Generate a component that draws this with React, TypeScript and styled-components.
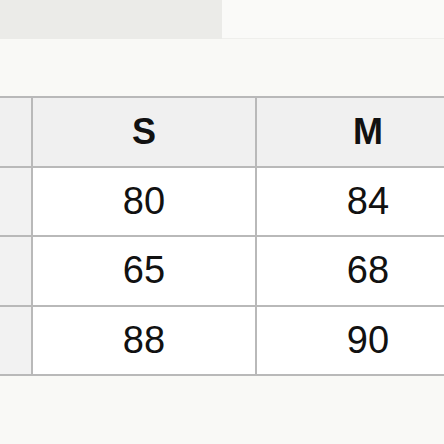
import styled, { createGlobalStyle } from 'styled-components'

const GlobalStyle = createGlobalStyle`
	html, body {
		margin: 0;
		padding: 0;
		background-color: #f9f9f6;
		overflow: hidden;
	}
	body {
		font-family: 'Liberation Sans', Arial, sans-serif;
		color: #111;
	}
`

const rows = [
	{ label: '', s: '80', m: '84' },
	{ label: '', s: '65', m: '68' },
	{ label: '', s: '88', m: '90' },
]

function App() {
	return (
		<>
			<GlobalStyle />
			<Page>
				<TopBar>
					<div className="tab" />
					<div className="rest" />
				</TopBar>
				<TableWrap>
					<SizeTable>
						<thead>
							<tr>
								<HeadCell $stub />
								<HeadCell>S</HeadCell>
								<HeadCell>M</HeadCell>
							</tr>
						</thead>
						<tbody>
							{rows.map((row, i) => (
								<tr key={i}>
									<StubCell>{row.label}</StubCell>
									<Cell>{row.s}</Cell>
									<Cell>{row.m}</Cell>
								</tr>
							))}
						</tbody>
					</SizeTable>
				</TableWrap>
			</Page>
		</>
	)
}

export default App

const Page = styled.div`
	width: 444px;
	height: 444px;
	display: flex;
	flex-direction: column;
	overflow: hidden;
`

const TopBar = styled.div`
	display: flex;
	height: 39px;

	.tab {
		width: 222px;
		background-color: #ebebe8;
	}

	.rest {
		flex: 1;
		height: 38px;
		background-color: #fafaf8;
		border-bottom: 1px solid #efefec;
	}
`

const TableWrap = styled.div`
	margin-top: 57px;
	width: 444px;
	overflow: hidden;
`

const SizeTable = styled.table`
	border-collapse: collapse;
	table-layout: fixed;
	width: 479px;

	tr {
		height: 69.5px;
	}
`

const HeadCell = styled.th<{ $stub?: boolean }>`
	width: ${(p) => (p.$stub ? '31px' : '222px')};
	padding: 0;
	border: 2px solid #b9b9b9;
	border-left: ${(p) => (p.$stub ? 'none' : '2px solid #b9b9b9')};
	background-color: #f0f0f0;
	font-size: 36px;
	font-weight: 700;
	text-align: center;
	vertical-align: middle;
`

const StubCell = styled.td`
	padding: 0;
	border: 2px solid #b9b9b9;
	border-left: none;
	background-color: #f2f2f2;
`

const Cell = styled.td`
	padding: 0;
	border: 2px solid #b9b9b9;
	background-color: #fff;
	font-size: 38px;
	text-align: center;
	vertical-align: middle;
`
